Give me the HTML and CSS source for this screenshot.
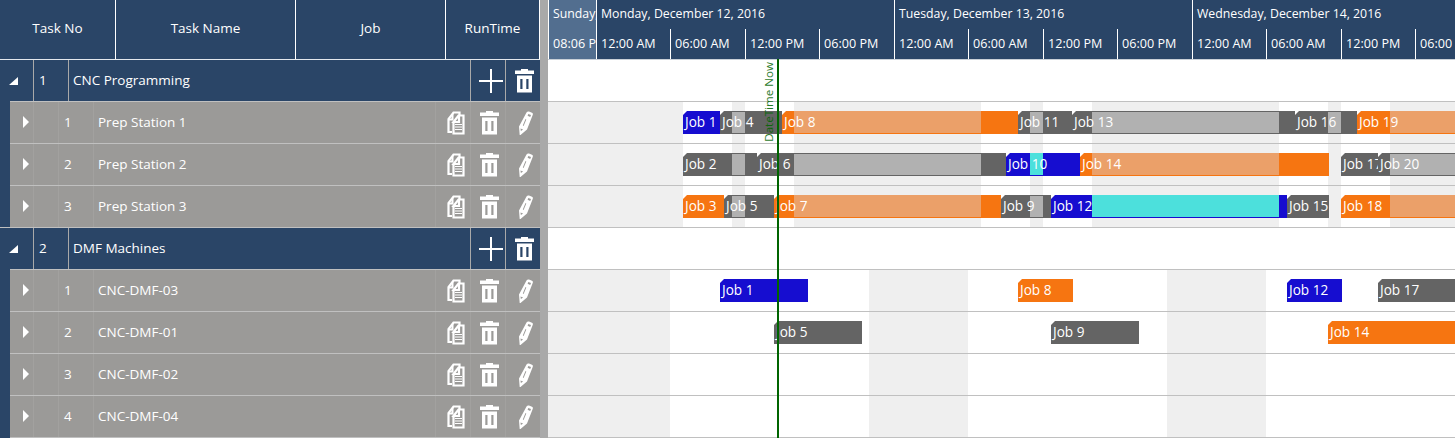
FILE: index.html
```html
<!DOCTYPE html>
<html lang="en">
<head>
  <meta charset="UTF-8" />
  <meta name="viewport" content="width=device-width, initial-scale=1" />
  <title>Job Schedule</title>
  <link rel="stylesheet" href="styles.css">
</head>
<body>
  <svg class="sprite" width="0" height="0">
    <symbol id="icon-plus" viewBox="0 0 24 24">
      <path d="M11 0h2v24h-2z M0 11h24v2H0z" fill="#fff" />
    </symbol>
    <symbol id="icon-trash" viewBox="0 0 19 24">
      <path fill="#fff" fill-rule="evenodd" d="M6 0h7v1.500h6V5H0V1.500h6z M2 6.500h15V23.500H2z M5.300 10v10h2.200V10z M11.300 10v10h2.200V10z" />
    </symbol>
    <symbol id="icon-copy" viewBox="0 0 18 24">
      <path fill="none" stroke="#fff" stroke-width="2.200" d="M5 21H1.500V8l5-6.500h6V4" />
      <path fill="none" stroke="#fff" stroke-width="2" d="M1 8.500h4.500V3" />
      <path fill="none" stroke="#fff" stroke-width="2.200" d="M6.500 11v11.500h10V4.500H11.500L6.500 11h5.500V5" />
      <path fill="none" stroke="#fff" stroke-width="1.200" d="M8 13.500h7M8 16h7M8 18.500h7" />
    </symbol>
    <symbol id="icon-pencil" viewBox="0 0 14 24">
      <path fill="#fff" fill-rule="evenodd" d="M7.500 1.500Q8.500 0 10 .5l3 1.200q1.200.6.8 2L8 18.500 1.500 24H.7L0 15.500z M9.300 3l-.7 1.800 2.600 1.100.8-1.800z M6.500 8L3.800 14.500l.8.400 2.700-6.500z M1.500 17.500l.4 2.500 2.200-1.600z" />
    </symbol>
  </svg>

  <div class="scheduler">
    <div class="grid">
      <div class="grid-header">
        <div class="col col-no">Task No</div>
        <div class="col col-name">Task Name</div>
        <div class="col col-job">Job</div>
        <div class="col col-run">RunTime</div>
      </div>
      <div id="gridRows"></div>
    </div>

    <div class="splitter"></div>

    <div class="timeline">
      <div class="time-header">
        <div class="day day-first">
          <div class="day-name">Sunday,</div>
          <div class="hours"><span>08:06 PM</span></div>
        </div>
        <div class="day">
          <div class="day-name">Monday, December 12, 2016</div>
          <div class="hours"><span>12:00 AM</span><span>06:00 AM</span><span>12:00 PM</span><span>06:00 PM</span></div>
        </div>
        <div class="day">
          <div class="day-name">Tuesday, December 13, 2016</div>
          <div class="hours"><span>12:00 AM</span><span>06:00 AM</span><span>12:00 PM</span><span>06:00 PM</span></div>
        </div>
        <div class="day">
          <div class="day-name">Wednesday, December 14, 2016</div>
          <div class="hours"><span>12:00 AM</span><span>06:00 AM</span><span>12:00 PM</span><span>06:00 PM</span></div>
        </div>
      </div>
      <div id="lanes"></div>
      <div class="now"><span class="now-label">DateTime Now</span></div>
    </div>
  </div>

  <script src="script.js"></script>
</body>
</html>
```

FILE: styles.css
```css
body {
  margin: 0;
  font-family: "Open Sans", "Noto Sans", sans-serif;
  font-size: 13.5px;
  color: #fff;
  background: #fff;
  overflow: hidden;
}
.sprite {
  position: absolute;
}
.scheduler {
  display: flex;
  height: 438px;
}
.grid {
  width: 540px;
  flex: none;
  background: #2a4567;
}
.splitter {
  width: 8px;
  flex: none;
  background: #a9a9a9;
}
.timeline {
  position: relative;
  flex: 1;
  min-width: 0;
  overflow: hidden;
}

/* left grid */
.grid-header {
  display: flex;
  height: 59px;
  border-bottom: 1px solid #e4e8ed;
}
.col {
  box-sizing: border-box;
  border-right: 1px solid #fff;
  line-height: 56px;
  text-align: center;
}
.col-no { width: 116px; }
.col-name { width: 180px; }
.col-job { width: 150px; }
.col-run { width: 94px; }

.row {
  display: flex;
  box-sizing: border-box;
  height: 42px;
  line-height: 41px;
  border-bottom: 1px solid #c0c0c0;
}
.row div {
  box-sizing: border-box;
  border-right: 1px solid #a9a9a9;
}
.row.task div {
  border-color: #a2a19f;
}
.row.group {
  border-bottom: 0;
  padding-bottom: 1px;
}
.row.task {
  margin-left: 10px;
  background: #9b9a98;
}
.row.task.first,
.row.group.next {
  margin-top: -1px;
  height: 43px;
  border-top: 1px solid #c0c0c0;
}
.row .toggle { width: 34px; }
.row .no { width: 35px; padding-left: 5px; }
.row .name { flex: 1; padding-left: 4px; }
.row .action { width: 35px; display: flex; align-items: center; justify-content: center; }
.row .action:last-child { width: 34px; border-right: 0; }
.row.task .toggle { width: 24px; }
.row.task .indent { width: 25px; }

.arrow-open,
.arrow-closed {
  display: block;
}
.arrow-open { margin: 17px 0 0 9px; }
.arrow-closed { margin: 14px 0 0 13px; }
.icon-plus { margin-left: 6px; }
.icon-copy { margin-left: 6px; }
.icon-trash { margin-left: 3px; }
.icon-pencil { margin-left: 6px; }

/* time scale */
.time-header {
  display: flex;
  height: 59px;
  border-bottom: 1px solid #c9d0d8;
  background: #2a4567;
}
.day {
  box-sizing: border-box;
  flex: none;
  width: 298px;
  border-left: 1px solid #fff;
  white-space: nowrap;
  overflow: hidden;
}
.day-first {
  width: 48px;
  background: #526e8f;
}
.day-name {
  height: 29px;
  line-height: 27px;
  padding-left: 4px;
  font-size: 12.3px;
}
.hours {
  display: flex;
  height: 30px;
  line-height: 29px;
  font-size: 12.6px;
}
.hours span {
  box-sizing: border-box;
  flex: none;
  width: 74px;
  padding-left: 4px;
  border-left: 1px solid #fff;
}
.hours span:first-child {
  width: 73px;
  border-left: 0;
}
.hours span:nth-child(2) {
  width: 75px;
}
.day-first .hours span:first-child {
  width: 47px;
  overflow: hidden;
}

/* lanes */
.lane {
  position: relative;
  box-sizing: border-box;
  height: 42px;
  border-bottom: 1px solid #c0c0c0;
  overflow: hidden;
}
.off {
  position: absolute;
  top: 0;
  bottom: 0;
  background: #efefef;
}
.bar {
  position: absolute;
  top: 9px;
  height: 23px;
  line-height: 22px;
  overflow: hidden;
  white-space: nowrap;
  font-size: 13.6px;
}
/* cut corner */
.bar::before {
  content: "";
  position: absolute;
  top: 0;
  left: 0;
  width: 4px;
  height: 4px;
  background: #fff;
  clip-path: polygon(0 0, 100% 0, 0 100%);
}
.bar .label {
  position: relative;
  padding-left: 2px;
}
.bar .closed {
  position: absolute;
  top: 0;
  bottom: 1px;
}
.blue { background: #160dd0; }
.blue .closed { background: #4ce0dc; }
.orange { background: #f67511; }
.orange .closed { background: #eba069; }
.gray { background: #646464; }
.gray .closed { top: 1px; background: #b1b1b1; }

.now {
  position: absolute;
  top: 59px;
  bottom: 0;
  left: 229px;
  width: 2px;
  background: #006400;
}
.now-label {
  position: absolute;
  top: 3px;
  right: 3px;
  writing-mode: vertical-rl;
  transform: rotate(180deg);
  font-size: 11.6px;
  line-height: 14px;
  white-space: nowrap;
  color: #006400;
  opacity: 0.85;
}
```

FILE: script.js
```js
// closed hours of each group, in timeline px
const prepOff = [[0, 135], [184, 197], [246, 433], [482, 495], [544, 731], [780, 793], [842, 1029]];
const dmfOff = [[0, 122], [321, 420], [619, 718]];

// jobs: [label, start, end, color]
const groups = [
  {
    name: 'CNC Programming', off: prepOff, tasks: [
      { name: 'Prep Station 1', jobs: [['Job 1', 135, 173, 'blue'], ['Job 4', 172, 235, 'gray'], ['Job 8', 234, 471, 'orange'], ['Job 11', 470, 525, 'gray'], ['Job 13', 524, 748, 'gray'], ['Job 16', 747, 810, 'gray'], ['Job 19', 809, 1029, 'orange']] },
      { name: 'Prep Station 2', jobs: [['Job 2', 135, 210, 'gray'], ['Job 6', 209, 459, 'gray'], ['Job 10', 458, 533, 'blue'], ['Job 14', 532, 781, 'orange'], ['Job 17', 793, 831, 'gray'], ['Job 20', 830, 1029, 'gray']] },
      { name: 'Prep Station 3', jobs: [['Job 3', 135, 177, 'orange'], ['Job 5', 176, 227, 'gray'], ['Job 7', 226, 454, 'orange'], ['Job 9', 453, 504, 'gray'], ['Job 12', 503, 740, 'blue'], ['Job 15', 739, 781, 'gray'], ['Job 18', 793, 1029, 'orange']] }
    ]
  },
  {
    name: 'DMF Machines', off: dmfOff, tasks: [
      { name: 'CNC-DMF-03', jobs: [['Job 1', 172, 260, 'blue'], ['Job 8', 470, 525, 'orange'], ['Job 12', 739, 794, 'blue'], ['Job 17', 830, 940, 'gray']] },
      { name: 'CNC-DMF-01', jobs: [['Job 5', 226, 314, 'gray'], ['Job 9', 503, 591, 'gray'], ['Job 14', 780, 940, 'orange']] },
      { name: 'CNC-DMF-02', jobs: [] },
      { name: 'CNC-DMF-04', jobs: [] }
    ]
  }
];

function icon(name, w, h) {
  return `<svg class="icon-${name}" width="${w}" height="${h}"><use href="#icon-${name}"/></svg>`;
}

function box(cls, start, end, content) {
  return `<div class="${cls}" style="left:${start}px;width:${end - start}px">${content}</div>`;
}

function bar(job, off) {
  const [label, start, end, color] = job;
  let closed = '';
  off.forEach(([a, b]) => {
    const from = Math.max(a, start);
    const to = Math.min(b, end);
    if (to - from > 1) closed += box('closed', from - start, to - start, '');
  });
  return box('bar ' + color, start, end, `${closed}<span class="label">${label}</span>`);
}

let rows = '';
let lanes = '';
groups.forEach((group, g) => {
  rows += `<div class="row group${g ? ' next' : ''}">
    <div class="toggle"><svg class="arrow-open" width="9" height="9"><path d="M9 0v8H0z" fill="#fff"/></svg></div>
    <div class="no">${g + 1}</div>
    <div class="name">${group.name}</div>
    <div class="action">${icon('plus', 24, 24)}</div>
    <div class="action">${icon('trash', 19, 24)}</div>
  </div>`;
  lanes += '<div class="lane"></div>';

  group.tasks.forEach((task, t) => {
    rows += `<div class="row task${t ? '' : ' first'}">
      <div class="toggle"><svg class="arrow-closed" width="6" height="12"><path d="M0 0l6 6-6 6z" fill="#fff"/></svg></div>
      <div class="indent"></div>
      <div class="no">${t + 1}</div>
      <div class="name">${task.name}</div>
      <div class="action">${icon('copy', 18, 24)}</div>
      <div class="action">${icon('trash', 19, 24)}</div>
      <div class="action">${icon('pencil', 14, 24)}</div>
    </div>`;
    lanes += `<div class="lane">${group.off.map(([a, b]) => box('off', a, b, '')).join('')}${task.jobs.map(job => bar(job, group.off)).join('')}</div>`;
  });
});

document.getElementById('gridRows').innerHTML = rows;
document.getElementById('lanes').innerHTML = lanes;
```
